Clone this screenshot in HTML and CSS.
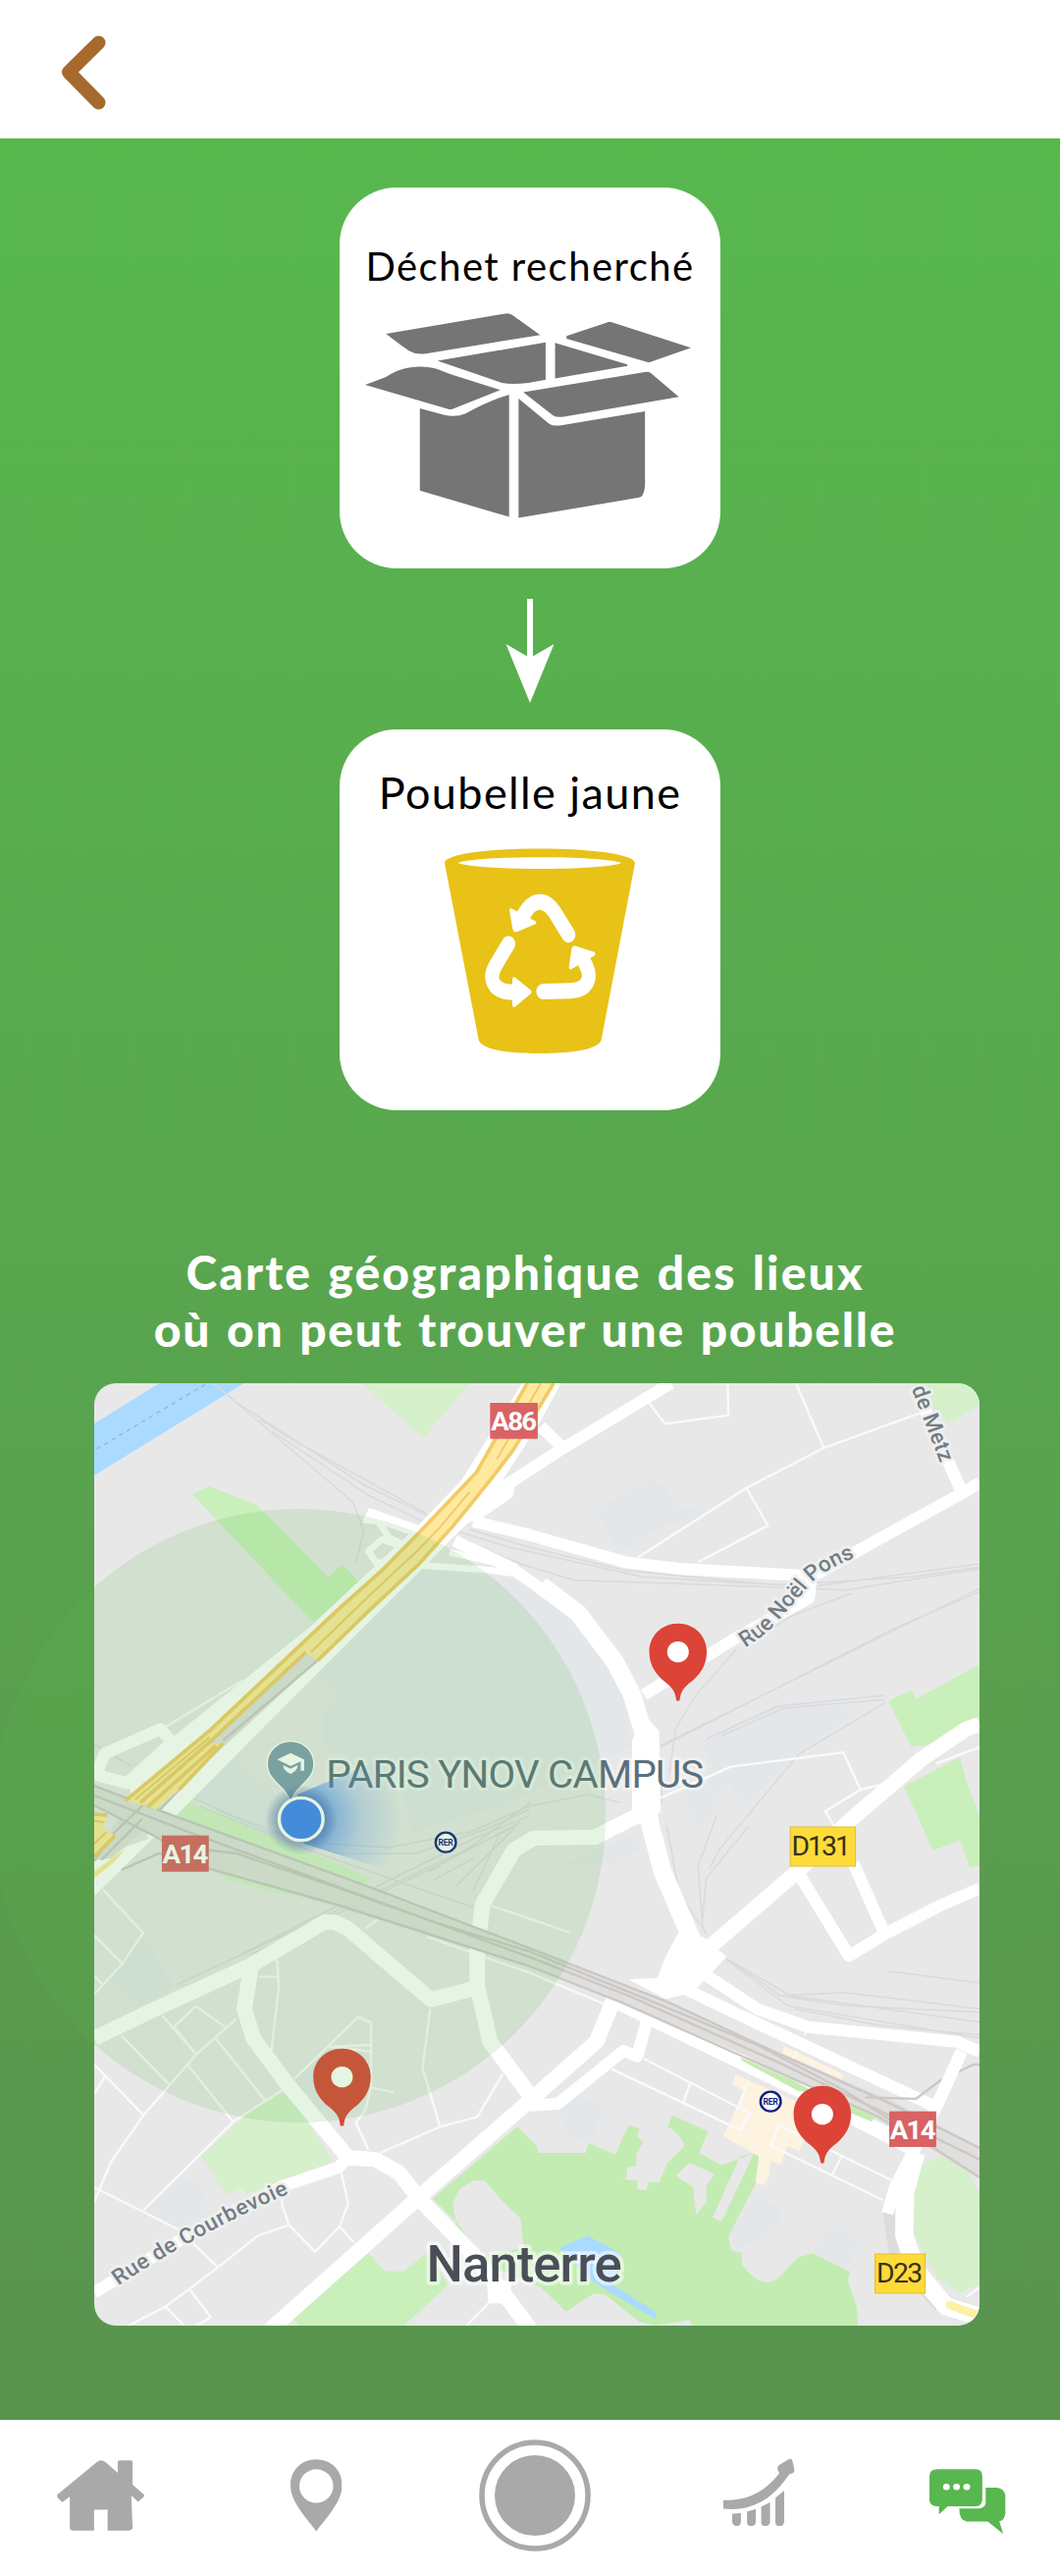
FILE: index.html
```html
<!DOCTYPE html>
<html lang="fr">
<head>
<meta charset="utf-8">
<title>Poubelle jaune</title>
<link rel="stylesheet" href="styles.css">
</head>
<body>
<header class="topbar">
  <svg class="back" viewBox="0 0 46 76"><path d="M38.500 7.500L8 37.500L38.500 68.500"/></svg>
</header>

<main class="screen">
  <section class="card">
    <h2 class="card-title waste">Déchet recherché</h2>
    <svg class="box-icon" viewBox="540 833 482 547" preserveAspectRatio="none">
      <path d="M571 888L748 834Q754 833 758 838L799 891L632 940Q617 945 607 935Q600 929 571 888ZM838 894L899 857Q902 855 906 858L1022 925L962 963Q960 965 957 963L838 901ZM647 960L807 911V1010Q765 1027 741 1018ZM821 912L928 970V974L821 1007ZM540 1024L571 1003C590 978 622 967 648 983Q662 994 684 1006L740 1038L669 1089Q666 1091 662 1088ZM774 1044L954 990Q959 988 963 993L1004 1056L834 1109Q824 1112 818 1106ZM621 1087L656 1104Q673 1112 688 1101Q724 1066 753 1050V1376L621 1306ZM767 1061L811 1126Q817 1135 830 1132L954 1095V1275Q955 1316 947 1324L767 1379Z"/>
    </svg>
  </section>

  <svg class="arrow" viewBox="0 0 50 106"><path d="M22 0H28V58.500L49.500 46L25 106L.5 46L22 58.500Z"/></svg>

  <section class="card card-bin">
    <h2 class="card-title bin">Poubelle jaune</h2>
    <svg class="bin-icon" viewBox="459 741 582 547" preserveAspectRatio="none">
      <path class="bin-body" fill-rule="evenodd" d="M459 780C461 758 585 742 750 742S1039 758 1041 780L938 1252C928 1278 850 1288 750 1288S572 1278 563 1252ZM500 780C560 801 940 801 1000 780C940 760 560 760 500 780Z"/>
      <g class="cycle">
        <path d="M838 972L794 910C770 878 735 876 711 905L699 920"/>
        <path d="M654 996L616 1052C590 1090 608 1125 668 1125"/>
        <path d="M760 1123L845 1121C893 1120 910 1090 893 1057L882 1036"/>
      </g>
      <g class="cycle-heads">
        <path d="M657 906Q657 900 664 902L738 936Q742 940 737 943L680 964Q669 966 667 956Z"/>
        <path d="M666 1090Q667 1081 675 1086L722 1119Q727 1124 722 1129L675 1164Q667 1168 666 1159Z"/>
        <path d="M847 1010Q850 999 861 1002L917 1018Q922 1023 918 1027L845 1064Q838 1065 839 1058Z"/>
      </g>
    </svg>
  </section>

  <h1 class="title"><span class="line-first">Carte géographique des lieux</span><span class="line-second">où on peut trouver une poubelle</span></h1>

  <div class="map">
    <svg class="map-art" viewBox="279 508 2619 2880" preserveAspectRatio="none">
      <defs>
        <radialGradient id="beam" gradientUnits="userSpaceOnUse" cx="891" cy="1840" r="300">
          <stop offset="0" stop-color="#4184f5"/><stop offset=".28" stop-color="#4184f5" stop-opacity=".6"/><stop offset=".6" stop-color="#4184f5" stop-opacity=".22"/><stop offset="1" stop-color="#4184f5" stop-opacity="0"/>
        </radialGradient>
        <radialGradient id="glow"><stop offset=".6" stop-color="#3c5fa0" stop-opacity=".55"/><stop offset="1" stop-color="#3c5fa0" stop-opacity="0"/></radialGradient>
        <path id="courbevoie" d="M350 3266Q590 3103 860 2982"/>
        <path id="noel" d="M2204 1316Q2262 1280 2290 1248L2400 1120Q2440 1075 2545 1035"/>
        <path id="metz" d="M2696 524L2792 778"/>
        <path id="pin" d="M0-118C48-118 85-80 85-32C85 12 64 38 42 58C14 80 8 92 5 117Q0 121-5 117C-8 92-14 80-42 58C-64 38-85 12-85-32C-85-80-48-118 0-118Z"/>
      </defs>

      <g class="zone">
        <path d="M1248 1078L1568 1110L1730 1270L1850 1470L1870 1620L1640 1720L1480 1800L1220 1880L1180 1700L955 1620V1512L1009 1468L930 1400L1127 1200ZM570 1777L700 1655L830 1780L840 1910ZM420 2195L515 2350L420 2405L320 2330ZM1758 897L1918 800L1980 825L1990 880L2080 890L2060 935L1978 935L1836 1025ZM2073 1600L2300 1495H2510V1530L2360 1640L2200 1800L2160 1730L2115 1780L2130 1800L2070 1860L2005 1780L2110 1680ZM1670 1980L1860 1890L1895 1930L1830 1975ZM1655 2720L1700 2680L1785 2720L1760 2800L1690 2840ZM420 3040L530 2930L590 2960L620 3040L520 3095ZM2240 2985L2315 3040L2300 3085L2180 3160L2155 3110ZM2455 3070L2540 3135L2505 3210L2405 3165ZM870 2635L930 2580L1000 2700L940 2740Z"/>
      </g>
      <path class="water" d="M279 632L472 508H722L279 790Z"/>
      <path class="ferry" d="M286 709L610 510"/>
      <path class="park" d="M569 847L618 823L757 878L972 1101L1013 1061L1062 1116L928 1240ZM2628 1480L2698 1445L2710 1473L2898 1367V1530L2740 1615L2696 1618ZM2675 1740L2840 1650L2860 1730L2898 1830V1982L2870 1990L2840 1905L2760 1935ZM865 3365L1090 3167L1140 3222H1195L1270 3160L1325 3265L1195 3388H885Z"/>
      <path class="park pale" d="M1070 508L1252 675L1392 508ZM2700 508H2898V577L2805 632ZM595 2870L730 2740L850 2670L985 2885L730 2985L710 2965L670 2990ZM540 1780L1098 2020L1050 2050L520 1860ZM600 1985L960 2090L800 2060L680 2025ZM2720 2900L2790 2870L2860 2910L2898 2980V3260L2840 3288L2770 3240L2705 3110L2700 2990Z"/>
      <path class="park deep" fill-rule="evenodd" d="M1280 3000L1530 2780L1590 2840L1592 2860H1733L1742 2830L1820 2865L1860 2775L1893 2787L1885 2810L1903 2828L1882 2865L1883 2900L1855 2905V2935L1840 2940L1885 2945V2970L1912 2975L1920 2950H1950L1975 2890L2025 2840Q2015 2800 1975 2780L1990 2745L2095 2795L2068 2860L2135 2898L2230 2862L2245 2870V2935L2155 3115L2165 3160L2195 3165V3200Q2250 3280 2300 3245L2360 3180L2405 3167L2515 3223L2508 3250L2535 3330L2538 3388H2050L2040 3370L1940 3388L1890 3375L1800 3300Q1770 3280 1740 3300L1675 3345L1600 3270L1440 3200L1350 3070ZM1340 3010L1360 2970L1400 2945H1435L1480 3000L1540 3060L1550 3150L1400 3180L1350 3080ZM2000 2930L2040 2890L2115 2925L2090 2960V3010L2060 3050L2050 2965ZM2190 2870L2230 2862L2135 3070L2108 3058Z"/>
      <path class="water" d="M1655 3150L1738 3113L1833 3165L1830 3220L1815 3265L1940 3345V3368L1810 3290L1740 3240Z"/>
      <path class="plaza" d="M2175 2620L2220 2640L2350 2700L2380 2820L2365 2855L2330 2840L2310 2895L2280 2885L2275 2930L2260 2960L2235 2950L2245 2870L2140 2810L2200 2670L2168 2650ZM2320 2533L2495 2620L2490 2635L2315 2555Z"/>

      <g class="rail">
        <path d="M632 508L850 700L1045 872L1077 960L1053 1055M690 560L1080 820L1270 915M770 620L900 700L1260 905M805 655L1090 850L1250 930M1350 960L1510 1010L1900 1100L2400 1130L2898 1060M1360 985L1540 1060L1700 1110L2000 1120L2500 1140L2898 1075M1390 955L1568 1010L1850 1080L2300 1125L2700 1100L2898 1070M2898 1135L2770 1200L1955 1615M2898 1145L2640 1260L1955 1620M2180 1320L2060 1460L2000 1560L1980 1700M2200 1310L2340 1220L2520 1150M2090 1595L2300 1495L2618 1462M2135 1585L2320 1500L2618 1475M2618 1485L2365 1640L2130 1930L2100 1990M2215 1862L2090 2020L2078 2150M2120 1830L2065 1985L2080 2180M1973 1860L2010 2070L2090 2190M1958 1790L1955 1700M2120 2245L2310 2380L2500 2410L2898 2430M2130 2255L2340 2380L2898 2460M2150 2270L2330 2410L2898 2510M2300 2380L2500 2370L2898 2420M2350 2420L2600 2470L2898 2500M2630 2305L2898 2340"/>
        <path d="M570 1775L690 1830L900 1910L1150 1927L1390 1880L1568 1800L1740 1765L1835 1790M640 1810L800 1880L1000 1945L1230 1945L1440 1870L1568 1810M590 1800L900 1930L1400 2110M1568 1830L1400 1900L990 2110L720 2250M1540 1850L1300 1980L740 2255M1530 1860L1100 2070L525 2345M1568 1790L1400 1920L1270 2000M1480 1880L1400 2060M1520 1870L1350 2045M1400 1960L1285 2025M279 1610L390 1680"/>
      </g>

      <g class="lane">
        <path d="M1920 568L1968 632L2155 606L2153 508M2355 508L2437 706L2720 600M2437 706L2208 828L1888 1040M2208 828L2272 943L2065 1055M1955 1775L2162 1680L2495 1636L2546 1750L2442 1816L2470 1865M2546 1750L2625 1730M2770 1670L2898 1620"/>
        <path d="M490 1558L720 1415M305 2055L424 2188L360 2285L279 2375M279 2195L360 2280M279 2318L305 2348M820 2270L825 2350L803 2550M768 2322H820M1080 2175L1120 2145M480 2440L580 2558L515 2475L580 2412L665 2475M700 2450L580 2560L500 2655L425 2745L330 2885L279 3010M358 2500L500 2650M555 2590L690 2765M635 2505L785 2700M840 2665L690 2765L425 3035M279 2590L425 2745M310 2628L279 2680M279 2965L530 3095L645 3210M380 3388L490 3330L645 3210L760 3115L855 3080L835 3020V2985M855 3080L932 3162L1005 3085L1030 3015L1010 2920M1005 3085L1047 3133M490 3330L545 3388M563 3280L624 3362L580 3388M870 2635L1060 2445L1098 2462V2660L1165 2675M970 2535L1098 2550M990 2535L1098 2530M1098 2660L1080 2730L1053 2768L1090 2850M1125 2860L1302 2780L1412 2750L1487 2620M1302 2780L1250 2600L1273 2420M1380 3388L1450 3315M1455 2105L1568 2145L1690 2188M1265 2200L1568 2310L1800 2410M1905 2572L2220 2740L2190 2790L1810 2604M2043 2646L2022 2705M2215 2640L2180 2730M2637 2943L2305 2775L2280 2838L2612 3004M2490 2870L2462 2928M2860 3300L2898 3270M2380 2500L2390 2480M2345 2575L2358 2550M2320 2640L2325 2610"/>
      </g>

      <path class="motorway-ramp" d="M2625 3020L2650 3180L2780 3330"/>

      <g class="road">
        <path class="w34" d="M1985 508L1658 712L1568 772L1490 825M1600 640L1665 705M1400 930L1568 972L1850 1055L2010 1075L2380 1096M2898 812L2850 842L2530 1025L2400 1100L2393 1165L2180 1285L1905 1460M2715 540L2850 850M2365 2010L2512 2258L2620 2190L2780 2105L2898 2052M2525 1975L2615 2185M2050 2290L2240 2420L2390 2475L2830 2520L2898 2550M2010 2350L2160 2425L2760 2715"/>
        <path class="w44" d="M2898 1550L2858 1565L2728 1655L2508 1850L2360 2000L2050 2275M1820 2380L1765 2520L1568 2700L1240 2995L800 3400M1830 2400L1930 2450L2400 2685L2690 2840M1905 1820L1760 1895L1580 1898L1520 1935L1428 2100L1412 2240V2350L1450 2520L1580 2700M1412 2355L1275 2392L1030 2175L990 2155L960 2155L745 2285L460 2420L279 2510M745 2280L723 2420L750 2510L850 2650L1030 2875L1110 2880L1180 2920L1240 3000L1400 3170L1480 3275L1570 3400"/>
        <path class="w34" d="M1030 2875L1000 2905L840 2960L560 3110L279 3287M1915 2455L1885 2565L1845 2548L1650 2710L1568 2715M2845 2550L2765 2730L2650 2960L2625 3045M1085 905L1250 965M1345 990L1510 1070L1640 1165"/>
        <path class="w60" d="M1600 1125L1710 1210L1820 1360L1870 1460L1905 1580L1910 1700L1922 1850L1960 2000L2060 2240M2710 2860L2678 2980L2675 3110L2710 3220L2800 3330L2898 3360"/>
        <path class="w20" d="M1075 925L1120 930L1150 980L1210 1010M1250 1065L1440 1078L1540 1092M1330 1025L1440 1050L1530 1070M1200 1010L1130 985L1090 1020L1115 1060L1180 1035"/>
        <path class="w34" d="M505 1600L475 1565L310 1640L285 1705L375 1730L510 1605"/>
        <path class="blob" d="M1905 1520L1950 1570L1955 1820L1870 1840V1600ZM2005 2190L2080 2200L2150 2260L2050 2370L1970 2390L1860 2330L1945 2325L1965 2270ZM1440 3250H1515L1505 3320H1445ZM1490 800L1523 820L1517 855L1420 925L1385 930Z"/>
        <path class="blob" d="M1545 508H1660L1590 640L1490 800L1440 905L1385 935L1330 990L1250 1075L1127 1200L520 1830L279 2075V1960L440 1900L383 1745L510 1590L915 1255L1060 1115L1240 940L1365 805Z"/>
      </g>

      <path class="motorway" d="M940 1355L660 1620L530 1745L440 1860L330 1960L279 1965L370 1800L640 1590L905 1330Z"/>
      <path class="motorway" d="M279 1735L520 1830L1100 2050L1568 2235L1978 2400L2240 2530L2640 2700L2898 2840V2935L2640 2780L2360 2640L2200 2560L1838 2400L1568 2290L1000 2110L620 1990L460 1890L279 1800Z"/>
      <path class="kerb" d="M279 1738L520 1832L1100 2050L1568 2235L1978 2400L2300 2555L2640 2712L2898 2845M279 1768L560 1880L1140 2100L1568 2262L1860 2380L2300 2582L2600 2730L2898 2880M500 1920L700 1945L1000 2050L1300 2160L1568 2245L1900 2385L2240 2530L2500 2670L2898 2935M279 1798L460 1893L620 1992L1000 2102L1568 2290L1838 2400L2360 2640L2600 2750L2720 2830M360 1995L470 1945L560 1960M2560 2690L2710 2695L2780 2640L2880 2590L2898 2590"/>
      <path class="kerb" d="M940 1355L660 1600M279 1968L340 1880L430 1790M300 1965L420 1840M475 1810L530 1750"/>
      <path class="highway-line" d="M2845 2550L2765 2730"/>
      <g class="highway">
        <path class="fill-only" d="M1560 508H1638L1520 710L1340 945L1240 1060L1095 1200L940 1355L905 1330L640 1590L430 1800L370 1785L620 1570L1000 1200L1130 1080L1240 965L1410 780Z"/>
        <path class="fill-only" d="M660 1608L620 1610L430 1795L460 1812L530 1750ZM279 1822L320 1828L305 1865L340 1892L279 1955ZM279 2020L279 2000L370 1930L340 1970Z"/>
        <path class="edge" d="M1560 508L1410 780L1240 965L1130 1080L1000 1200L620 1570L370 1785M1638 508L1520 710L1450 805L1340 945L1240 1060L1095 1200L940 1355M905 1330L625 1600L415 1790M660 1608L530 1750M640 1615L440 1800M279 1825L318 1828M279 1955L340 1892"/>
        <path class="inner" d="M1600 508L1470 740M1390 840L1300 950L1240 1015L1100 1150L920 1330M620 1590L400 1780M279 1845L308 1850M279 1915L315 1880"/>
      </g>
      <path class="highway-end" d="M2810 3325L2890 3355"/>
      <path class="park deep" d="M2190 2568L2350 2640L2420 2680L2360 2670L2195 2578ZM2515 2715L2588 2750L2580 2765L2515 2738Z"/>

      <g class="shield-red">
        <rect x="1450" y="568" width="141" height="110"/><rect x="479" y="1890" width="139" height="111"/><rect x="2631" y="2733" width="139" height="109"/>
      </g>
      <g class="shield-red-text">
        <text x="1453" y="653" textLength="136">A86</text><text x="481" y="1975" textLength="136">A14</text><text x="2633" y="2817" textLength="136">A14</text>
      </g>
      <g class="shield-yellow">
        <rect x="2338" y="1864" width="193" height="120"/><rect x="2589" y="3169" width="148" height="120"/>
      </g>
      <g class="shield-yellow-text">
        <text x="2342" y="1951" textLength="175">D131</text><text x="2593" y="3256" textLength="137">D23</text>
      </g>

      <g class="street-label">
        <text textLength="580"><textPath href="#courbevoie">Rue de Courbevoie</textPath></text>
        <text textLength="432"><textPath href="#noel">Rue Noël Pons</textPath></text>
        <text textLength="244"><textPath href="#metz">de Metz</textPath></text>
      </g>
      <text class="city-label" x="1262" y="3252" textLength="578">Nanterre</text>

      <g class="rer"><circle cx="1319" cy="1911" r="30"/><circle cx="2280" cy="2703" r="30"/></g>
      <g class="rer-text"><text x="1297" y="1920" textLength="44">RER</text><text x="2258" y="2712" textLength="44">RER</text></g>

      <path class="campus-pin" d="M860 1604C898 1604 927 1634 927 1671C927 1722 880 1730 860 1782C840 1730 793 1722 793 1671C793 1634 822 1604 860 1604Z"/>
      <path class="cap" d="M820 1658L860 1638L900 1658V1692H890V1664L860 1678ZM838 1675L860 1686L881 1675Q881 1692 860 1702Q838 1692 838 1675Z"/>
      <text class="campus-label" x="965" y="1745" textLength="1118">PARIS YNOV CAMPUS</text>
      <path fill="url(#beam)" d="M880 1765L1190 1630V2010L900 1915Z"/>
      <circle cx="891" cy="1842" r="108" fill="url(#glow)"/>
      <circle class="me" cx="891" cy="1840" r="65"/>

      <g class="pins">
        <use href="#pin" x="2006" y="1360"/><use href="#pin" x="1012" y="2659"/><use href="#pin" x="2433" y="2773"/>
      </g>
      <g class="pin-eyes"><circle cx="2006" cy="1329" r="32"/><circle cx="1012" cy="2628" r="32"/><circle cx="2433" cy="2742" r="32"/></g>
    </svg>
    <div class="radius"></div>
  </div>
</main>

<nav class="tabs">
  <svg class="tab home" viewBox="84 167 130 215" preserveAspectRatio="none"><path d="M84 273L143 173Q149 163 156 173L174 206V172Q174 168 178 168H192Q196 168 196 172V242L213 272Q214 277 211 281L204 294L194 274L196 372Q195 381 190 381H159V318H139V381H108Q103 380 103 372V278L92 295L85 281Z"/></svg>
  <svg class="tab place" viewBox="429 164 76 220" preserveAspectRatio="none"><path fill-rule="evenodd" d="M467 165C489 165 505 198 505 243C505 292 486 332 467 384C448 332 429 292 429 243C429 198 445 165 467 165ZM467 195A25 51 0 1 0 467 297A25 51 0 1 0 467 195Z"/></svg>
  <svg class="tab record" viewBox="0 0 114 114"><circle class="ring" cx="57" cy="57" r="54"/><circle cx="57" cy="57" r="41"/></svg>
  <svg class="tab stats" viewBox="1070 160 106 208" preserveAspectRatio="none"><path d="M1070 288C1105 291 1132 262 1153 206Q1148 190 1152 182L1167 163Q1171 161 1172 166L1175 194Q1176 207 1168 208C1142 287 1112 323 1070 314ZM1083 330L1096 327V356Q1095 367 1090 367T1083 356ZM1105 323L1118 315V356Q1117 367 1111 367T1105 356ZM1126 308L1139 295V356Q1138 367 1132 367T1126 356ZM1147 281L1160 259V356Q1159 367 1153 367T1147 356Z"/></svg>
  <svg class="tab chat" viewBox="1375 194 113 200" preserveAspectRatio="none"><path fill-rule="evenodd" d="M1385 195H1444Q1453 196 1453 216V289Q1452 308 1444 308H1402L1389 333V308H1385Q1375 306 1375 287V216Q1375 197 1385 195ZM1400 239A5 10 0 1 0 1400 259A5 10 0 1 0 1400 239ZM1415 239A5 10 0 1 0 1415 259A5 10 0 1 0 1415 239ZM1430 239A5 10 0 1 0 1430 259A5 10 0 1 0 1430 239Z"/><path d="M1458 251H1474Q1486 254 1487 276V329Q1486 351 1478 354L1484 393L1461 355H1430Q1419 352 1419 315H1448Q1456 313 1458 300Z"/></svg>
</nav>
</body>
</html>
```
FILE: styles.css
```css
* { box-sizing: border-box; }
body { margin: 0; width: 1080px; height: 2624px; display: flex; flex-direction: column; background: #fff; font-family: Lato, "Open Sans", sans-serif; overflow: hidden; }
svg { display: block; }
h1, h2 { margin: 0; font-weight: 400; white-space: nowrap; }

.topbar { height: 141px; padding: 36px 0 0 62px; flex: none; }
.back { width: 46px; height: 76px; fill: none; stroke: #a66a2d; stroke-width: 14; stroke-linecap: round; stroke-linejoin: round; }

.screen { height: 2324px; flex: none; display: flex; flex-direction: column; align-items: center; padding-top: 50px; background: linear-gradient(#58b84e, #59934e); overflow: hidden; }
.card { width: 388px; height: 388px; border-radius: 58px; background: #fff; display: flex; flex-direction: column; align-items: center; }
.card-title { color: #000; line-height: 56px; }
.waste { margin-top: 52px; font-size: 40px; letter-spacing: 1.45px; }
.bin { margin-top: 36px; font-size: 45px; letter-spacing: 1.4px; }
.box-icon { width: 332px; height: 209px; margin: 20px 4px 0 0; fill: #757575; }
.arrow { width: 50px; height: 106px; margin: 30.500px 0 27px; fill: #fff; }
.bin-icon { width: 194px; height: 209px; margin: 29px 0 0 20px; }
.bin-body { fill: #e8c216; }
.cycle { fill: none; stroke: #fff; stroke-width: 42; stroke-linecap: round; }
.cycle-heads { fill: #fff; }

.title { margin: 136px 10px 0 0; display: flex; flex-direction: column; align-items: center; color: #fff; font-size: 48px; font-weight: 900; line-height: 58px; word-spacing: 2.6px; }
.line-first { letter-spacing: 2.15px; }
.line-second { letter-spacing: 1.75px; }

.map { position: relative; width: 902px; height: 960px; margin: 26px 0 0 14px; flex: none; }
.map-art { width: 902px; height: 960px; border-radius: 22px; background: #e8e8e8; }
.radius { position: absolute; left: -104px; top: 128px; width: 625px; height: 625px; border-radius: 50%; background: rgba(88, 182, 78, .155); }

.zone { fill: #e3e7ea; }
.water { fill: #aadaff; }
.ferry { stroke: #9db4c4; stroke-width: 4; stroke-dasharray: 13 13; }
.park { fill: #c9efbb; }
.park.pale { fill: #d5f0ca; }
.park.deep { fill: #c3ecb2; }
.plaza { fill: #fdf3e0; }
.rail { fill: none; stroke: #d8dade; stroke-width: 4.500; }
.lane { fill: none; stroke: #fafafa; stroke-width: 7; }
.motorway { fill: #e0dfde; }
.motorway-ramp { fill: none; stroke: #dddcdb; stroke-width: 34; }
.kerb { fill: none; stroke: #cbc8c5; stroke-width: 7; }
.road { fill: none; stroke: #fff; stroke-linejoin: round; }
.w20 { stroke-width: 20; }
.w34 { stroke-width: 36; }
.w44 { stroke-width: 46; }
.w60 { stroke-width: 54; }
.blob { fill: #fff; stroke: none; }
.highway { fill: none; stroke: #f2cb68; }
.fill-only { fill: #ffe99f; stroke: none; }
.edge { stroke-width: 11; }
.inner { stroke-width: 6; }
.highway-line { stroke: #fff; stroke-width: 36; }
.highway-end { stroke: #fff0a8; stroke-width: 26; stroke-linecap: round; }

.shield-red { fill: #d96264; }
.shield-red-text { fill: #fff; font: 700 80px Roboto, sans-serif; }
.shield-yellow { fill: #fedb38; stroke: #dfbd38; stroke-width: 3; }
.shield-yellow-text { fill: #37311c; font: 400 82px Roboto, sans-serif; }
.street-label { fill: #737c83; font: 500 66px Roboto, sans-serif; stroke: #efefef; stroke-width: 16; stroke-linejoin: round; paint-order: stroke; }
.city-label { fill: #4a4f57; font: 500 153px Roboto, sans-serif; stroke: rgba(255, 255, 255, .55); stroke-width: 22; stroke-linejoin: round; paint-order: stroke; }
.campus-label { fill: #5c6f7b; font: 400 117px Roboto, sans-serif; stroke: rgba(255, 255, 255, .4); stroke-width: 20; stroke-linejoin: round; paint-order: stroke; }
.rer { fill: #fff; stroke: #141f7c; stroke-width: 7; }
.rer-text { fill: #141f7c; font: 700 25px Roboto, sans-serif; }
.campus-pin { fill: #809db0; stroke: #fff; stroke-width: 8; paint-order: stroke; }
.cap { fill: #fff; }
.me { fill: #4184f5; stroke: #fff; stroke-width: 10; }
.pins { fill: #db4437; }
.pin-eyes { fill: #fff; }

.tabs { flex: 1; display: flex; align-items: flex-start; background: #fff; fill: #a9a9a9; }
.tab { flex: none; }
.home { width: 89.500px; height: 72px; margin: 40.500px 0 0 58px; }
.place { width: 52.500px; height: 73.500px; margin: 39.500px 0 0 148px; }
.record { width: 114px; height: 114px; margin: 19.500px 0 0 140px; }
.ring { fill: none; stroke: #a9a9a9; stroke-width: 5.500; }
.stats { width: 73px; height: 69.500px; margin: 38.500px 0 0 135px; }
.chat { width: 78px; height: 66.500px; margin: 49.500px 0 0 137px; fill: #58b74e; }
```
